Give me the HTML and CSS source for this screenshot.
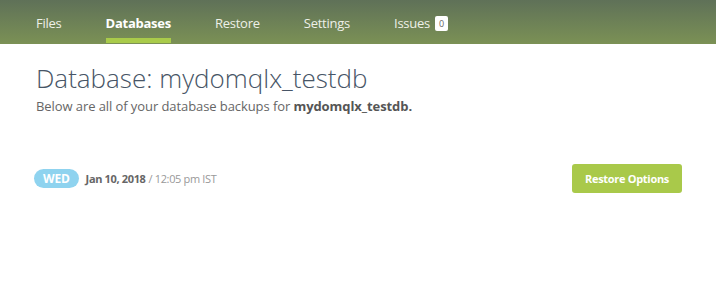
FILE: index.html
```html
<!DOCTYPE html>
<html lang="en">
<head>
    <meta charset="UTF-8">
    <title>Database backups</title>
    <link rel="stylesheet" href="styles.css">
</head>
<body>
    <nav class="topnav">
        <a class="nav-link" href="#">Files</a>
        <a class="nav-link active" href="#">Databases</a>
        <a class="nav-link" href="#">Restore</a>
        <a class="nav-link" href="#">Settings</a>
        <a class="nav-link" href="#">Issues <span class="count">0</span></a>
    </nav>

    <div class="content">
        <h1>Database: mydomqlx_testdb</h1>
        <p class="intro">Below are all of your database backups for <strong>mydomqlx_testdb.</strong></p>

        <div class="backup-row">
            <div class="backup-date">
                <span class="day">WED</span>
                <span class="date">Jan 10, 2018</span>
                <span class="time">/ 12:05 pm IST</span>
            </div>
            <button class="restore-button">Restore Options</button>
        </div>
    </div>
</body>
</html>
```

FILE: styles.css
```css
body {
    font-family: 'Open Sans', sans-serif;
    margin: 0;
    padding: 0;
    background: #fff;
    color: #555;
}
.topnav {
    display: flex;
    gap: 44px;
    height: 44px;
    padding-left: 36px;
    background: linear-gradient(to bottom, #5f7158, #7b9155);
}
.nav-link {
    display: flex;
    align-items: center;
    font-size: 13px;
    letter-spacing: -0.25px;
    color: #eef0e8;
    text-decoration: none;
    border-bottom: 5px solid transparent;
    padding-top: 8px;
    box-sizing: border-box;
    margin-bottom: 1px;
}
.nav-link.active {
    font-weight: bold;
    color: #fff;
    border-bottom-color: #a9cb4a;
}
.count {
    display: inline-block;
    margin-left: 5px;
    padding: 0 4px;
    font-size: 9px;
    line-height: 15px;
    letter-spacing: 0;
    background: #fff;
    color: #666;
    border-radius: 2px;
}
.content {
    padding: 0 34px 0 36px;
}
h1 {
    font-size: 26px;
    font-weight: 300;
    color: #475566;
    margin: 16px 0 0;
    line-height: 36px;
}
.intro {
    font-size: 13px;
    letter-spacing: -0.08px;
    margin: 1px 0 0;
    color: #666;
}
.intro strong {
    color: #555;
}
.backup-row {
    display: flex;
    justify-content: space-between;
    align-items: center;
    margin-top: 49px;
}
.backup-date {
    display: flex;
    align-items: center;
    font-size: 11px;
    letter-spacing: -0.35px;
}
.day {
    background: #8fd3ef;
    color: #fff;
    font-size: 12px;
    font-weight: bold;
    letter-spacing: -0.2px;
    border-radius: 10px;
    padding: 0 9px;
    line-height: 19px;
    margin-right: 7px;
    margin-left: -2px;
}
.date {
    font-weight: bold;
    color: #666;
}
.time {
    color: #999;
    margin-left: 3px;
}
.restore-button {
    font-family: 'Open Sans', sans-serif;
    font-size: 11px;
    letter-spacing: -0.3px;
    font-weight: bold;
    color: #fff;
    background: #a9c94a;
    border: none;
    border-radius: 3px;
    width: 110px;
    height: 29px;
    cursor: pointer;
}
```
